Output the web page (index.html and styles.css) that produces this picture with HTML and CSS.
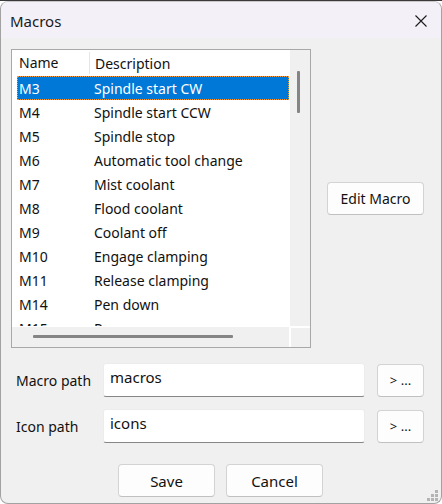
FILE: index.html
```html
<!DOCTYPE html>
<html lang="en">
<head>
  <meta charset="UTF-8">
  <title>Macros</title>
  <link rel="stylesheet" href="styles.css">
</head>
<body>
  <div class="window">
    <div class="titlebar">
      <span class="title">Macros</span>
      <svg class="close" width="12" height="12" viewBox="0 0 12 12">
        <path d="M0.5 0.5 L11.5 11.5 M11.5 0.5 L0.5 11.5" stroke="#1b1b1b" stroke-width="1.1" fill="none"/>
      </svg>
    </div>

    <div class="content">
      <div class="top-row">
        <div class="listbox">
          <div class="list-area">
            <div class="list-head">
              <div class="col-name">Name</div>
              <div class="col-desc">Description</div>
            </div>
            <div class="row selected"><div class="col-name">M3</div><div class="col-desc">Spindle start CW</div></div>
            <div class="row"><div class="col-name">M4</div><div class="col-desc">Spindle start CCW</div></div>
            <div class="row"><div class="col-name">M5</div><div class="col-desc">Spindle stop</div></div>
            <div class="row"><div class="col-name">M6</div><div class="col-desc">Automatic tool change</div></div>
            <div class="row"><div class="col-name">M7</div><div class="col-desc">Mist coolant</div></div>
            <div class="row"><div class="col-name">M8</div><div class="col-desc">Flood coolant</div></div>
            <div class="row"><div class="col-name">M9</div><div class="col-desc">Coolant off</div></div>
            <div class="row"><div class="col-name">M10</div><div class="col-desc">Engage clamping</div></div>
            <div class="row"><div class="col-name">M11</div><div class="col-desc">Release clamping</div></div>
            <div class="row"><div class="col-name">M14</div><div class="col-desc">Pen down</div></div>
            <div class="row"><div class="col-name">M15</div><div class="col-desc">Pen up</div></div>
          </div>
          <div class="vscroll"><div class="vthumb"></div></div>
          <div class="hscroll"><div class="hthumb"></div></div>
          <div class="corner"></div>
        </div>
        <div class="side">
          <button class="btn btn-edit">Edit Macro</button>
        </div>
      </div>

      <div class="path-row">
        <label class="path-label">Macro path</label>
        <div class="path-input">macros</div>
        <button class="btn btn-browse">&gt; ...</button>
      </div>
      <div class="path-row">
        <label class="path-label">Icon path</label>
        <div class="path-input">icons</div>
        <button class="btn btn-browse">&gt; ...</button>
      </div>

      <div class="bottom-row">
        <button class="btn btn-main">Save</button>
        <button class="btn btn-main">Cancel</button>
      </div>
    </div>

    <svg class="grip" width="11" height="11" viewBox="0 0 11 11">
      <rect x="8" y="0" width="3" height="3" fill="#b4b4b4"/>
      <rect x="4" y="4" width="3" height="3" fill="#b4b4b4"/>
      <rect x="8" y="4" width="3" height="3" fill="#b4b4b4"/>
      <rect x="0" y="8" width="3" height="3" fill="#b4b4b4"/>
      <rect x="4" y="8" width="3" height="3" fill="#b4b4b4"/>
      <rect x="8" y="8" width="3" height="3" fill="#b4b4b4"/>
    </svg>
  </div>
</body>
</html>
```

FILE: styles.css
```css
body {
  margin: 0;
  background: #ffffff;
  font-family: 'Noto Sans', 'Open Sans', sans-serif;
  font-size: 14px;
  color: #111;
  border-top: 1px solid #3a3a3a;
}
.window {
  position: relative;
  width: 442px;
  height: 503px;
  box-sizing: border-box;
  border: 1px solid #a2a2a2;
  border-top-color: #c9c6cc;
  border-radius: 8px;
  background: #f0f0f0;
  overflow: hidden;
}
.titlebar {
  height: 36px;
  background: #f3f0f7;
  display: flex;
  align-items: center;
  justify-content: space-between;
  padding: 0 14px 0 9px;
}
.title {
  font-size: 15px;
  color: #1a1a1a;
  margin-top: 1px;
}
.close {
  margin-top: 1px;
}
.content {
  padding: 11px 17px 0 10px;
}
.top-row {
  display: flex;
  align-items: center;
}
.listbox {
  width: 300px;
  height: 299px;
  box-sizing: border-box;
  border: 1px solid #a8a8a8;
  background: #fff;
  display: grid;
  grid-template-columns: 1fr 21px;
  grid-template-rows: 1fr 21px;
}
.list-area {
  overflow: hidden;
  padding-left: 5px;
}
.list-head {
  height: 26px;
  display: flex;
  align-items: center;
}
.list-head .col-name {
  border-right: 1px solid #e5e5e5;
  height: 22px;
  line-height: 22px;
}
.row {
  height: 24px;
  display: flex;
  align-items: center;
  white-space: nowrap;
}
.col-name {
  width: 70px;
  flex: none;
  padding-left: 2px;
}
.col-desc {
  padding-left: 5px;
}
.row.selected {
  background: #0078d7;
  color: #fff;
  outline: 1px dotted #f39a3c;
  outline-offset: -1px;
}
.vscroll {
  background: #f0f0f0;
  border-left: 1px solid #fff;
  position: relative;
}
.vthumb {
  position: absolute;
  left: 7px;
  top: 21px;
  width: 3px;
  height: 42px;
  background: #858585;
  border-radius: 1px;
}
.hscroll {
  background: #f0f0f0;
  border-top: 1px solid #fff;
  position: relative;
}
.hthumb {
  position: absolute;
  left: 21px;
  top: 8px;
  width: 200px;
  height: 3px;
  background: #858585;
  border-radius: 1px;
}
.corner {
  background: #f0f0f0;
  border-left: 2px solid #fff;
  border-top: 2px solid #fff;
}
.side {
  flex: 1;
  display: flex;
  justify-content: flex-end;
}
.btn {
  font-family: 'Noto Sans', 'Open Sans', sans-serif;
  font-size: 14px;
  color: #111;
  background: #fdfdfd;
  border: 1px solid #d3d3d3;
  border-bottom-color: #c0c0c0;
  border-radius: 4px;
  padding: 0;
  box-sizing: border-box;
}
.btn-edit {
  width: 97px;
  height: 33px;
}
.path-row {
  display: flex;
  align-items: center;
  margin-top: 15px;
  height: 34px;
}
.path-row + .path-row {
  margin-top: 12px;
}
.path-label {
  flex: none;
  box-sizing: border-box;
  width: 92px;
  padding-left: 5px;
  font-size: 14px;
}
.path-input {
  flex: none;
  width: 262px;
  height: 34px;
  box-sizing: border-box;
  background: #fff;
  border: 1px solid #ececec;
  border-bottom: 1px solid #868686;
  border-radius: 3px;
  padding: 3px 6px 0;
  line-height: 20px;
  font-size: 15px;
}
.btn-browse {
  flex: none;
  width: 47px;
  height: 33px;
  margin-left: 12px;
  font-size: 13px;
}
.bottom-row {
  display: flex;
  justify-content: center;
  gap: 11px;
  margin-top: 21px;
  padding-left: 6px;
}
.btn-main {
  width: 97px;
  height: 33px;
  font-size: 15px;
}
.grip {
  position: absolute;
  right: 3px;
  bottom: 2px;
}
```
